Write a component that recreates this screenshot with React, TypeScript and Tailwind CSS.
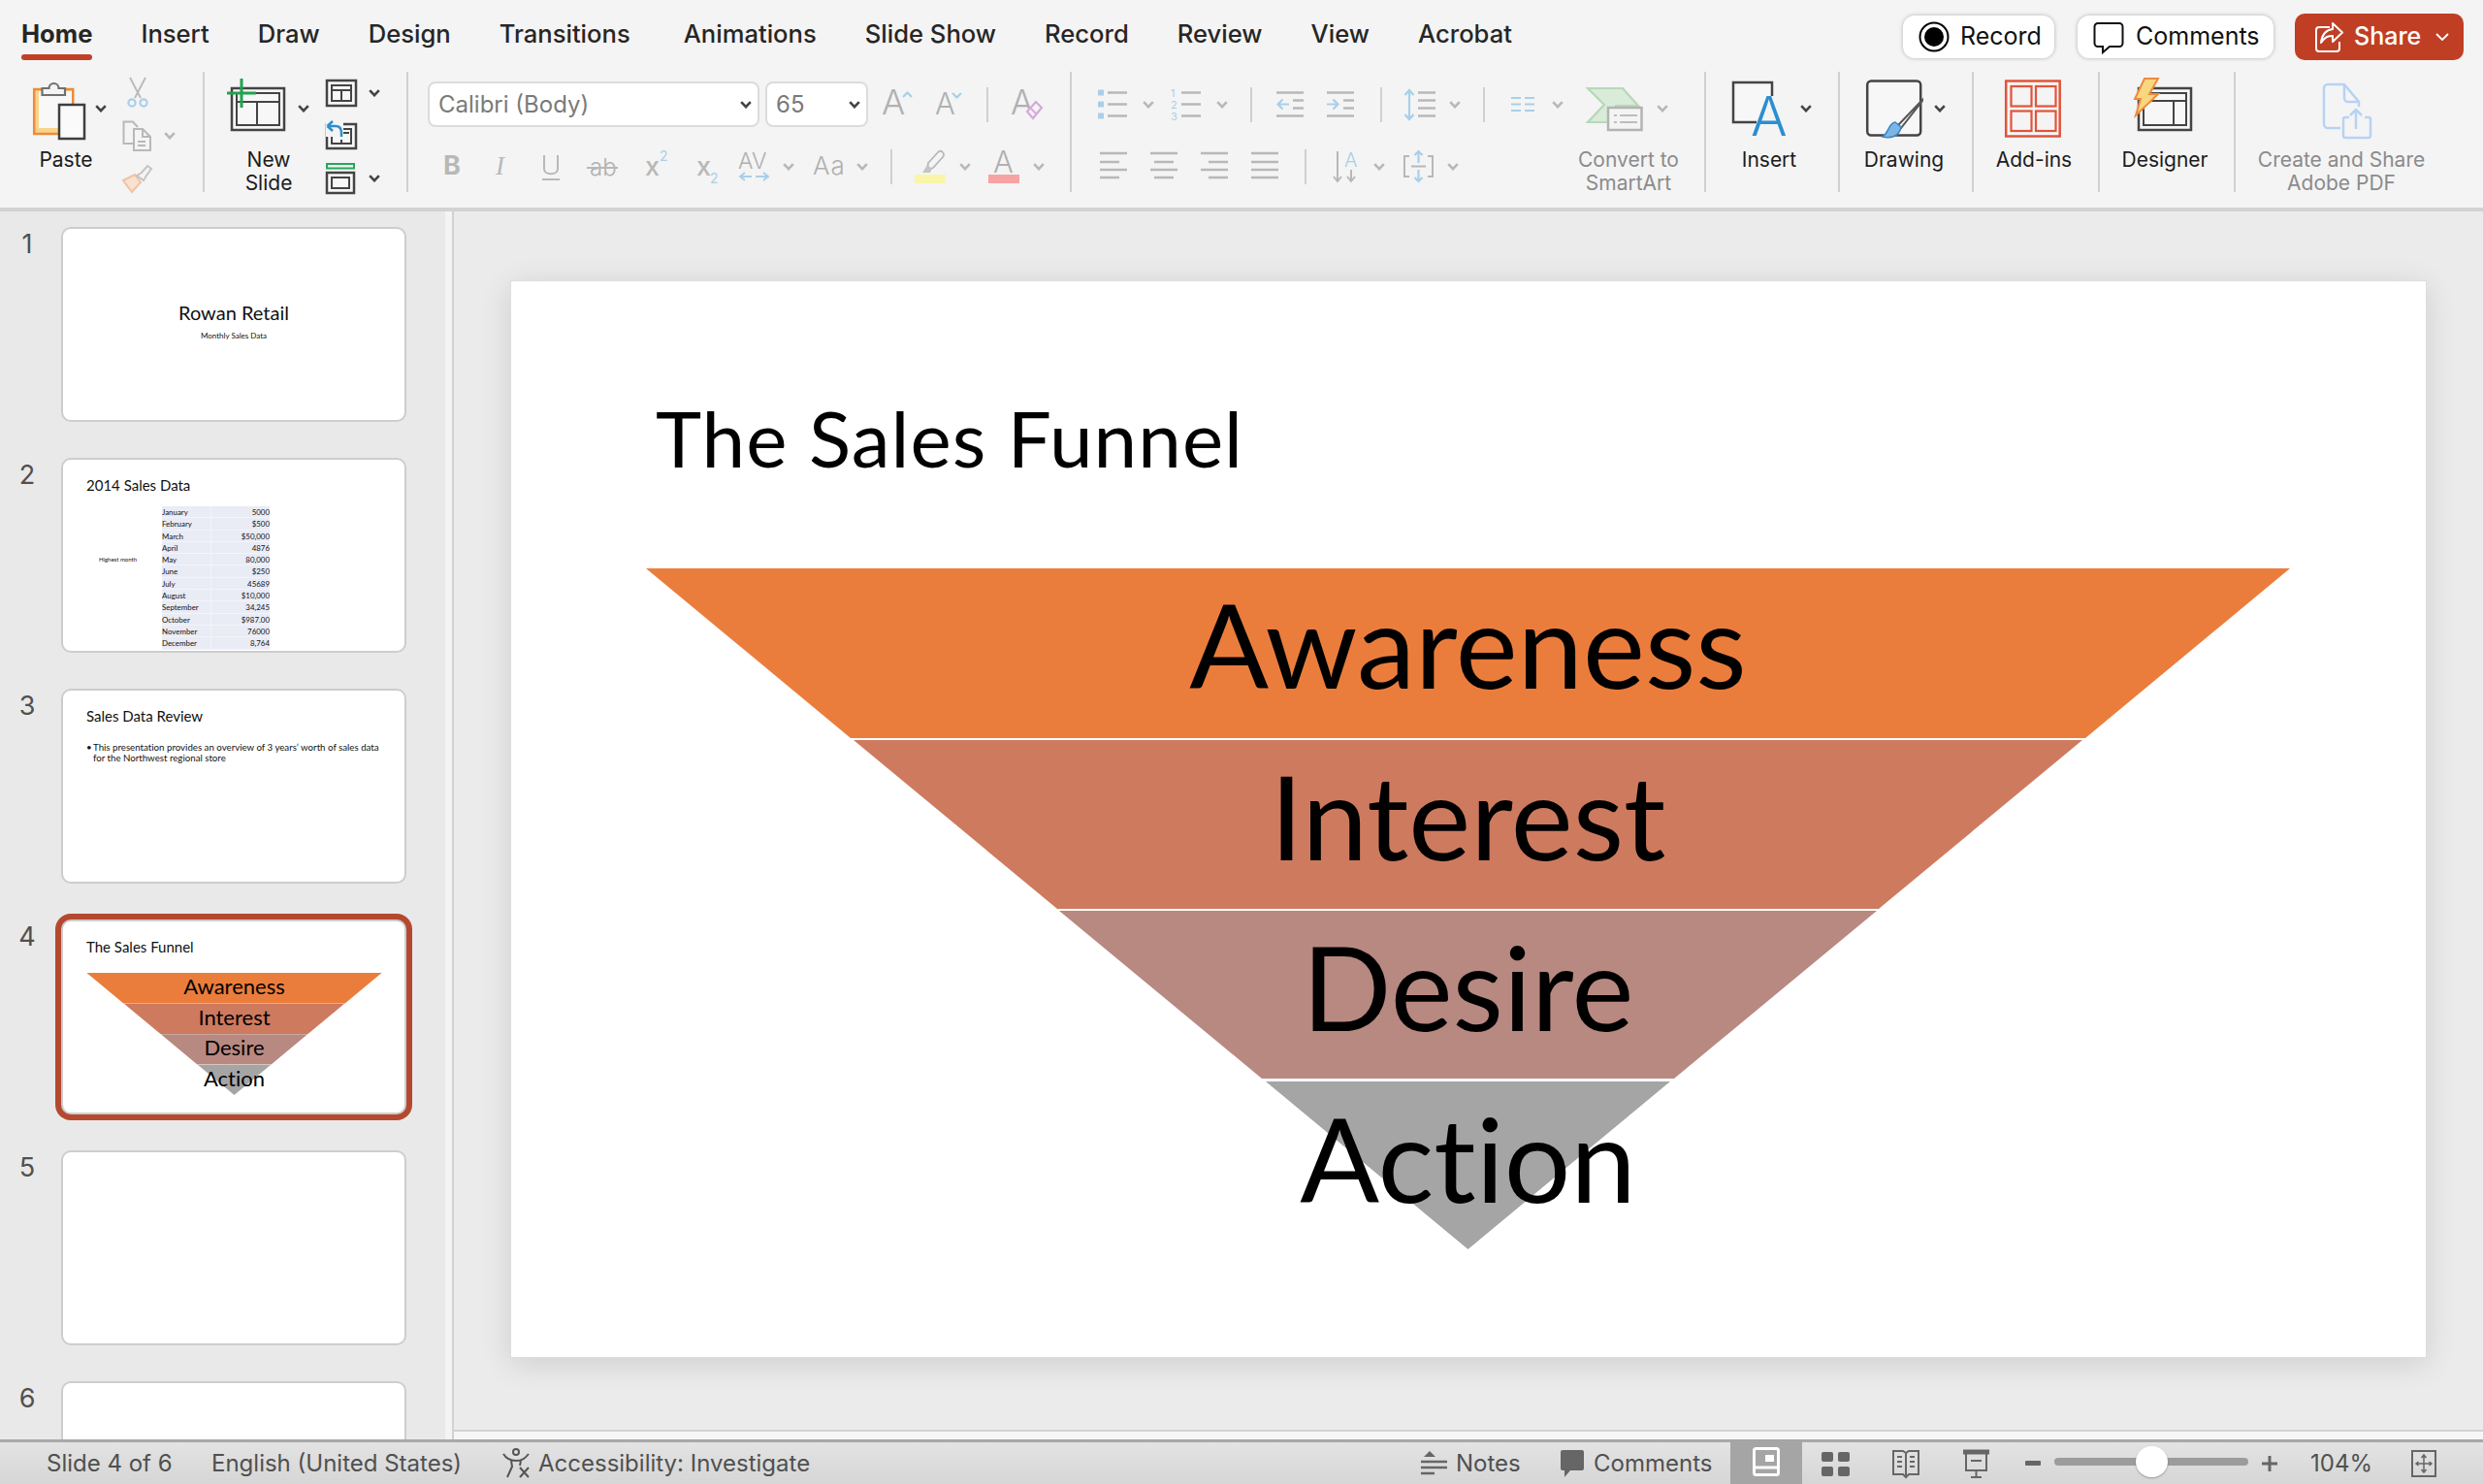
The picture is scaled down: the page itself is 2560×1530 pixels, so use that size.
import type { ReactNode } from 'react';

const TABS = ['Home', 'Insert', 'Draw', 'Design', 'Transitions', 'Animations', 'Slide Show', 'Record', 'Review', 'View', 'Acrobat'];

const SALES: [string, string][] = [
    ['January', '5000'],
    ['February', '$500'],
    ['March', '$50,000'],
    ['April', '4876'],
    ['May', '80,000'],
    ['June', '$250'],
    ['July', '45689'],
    ['August', '$10,000'],
    ['September', '34,245'],
    ['October', '$987.00'],
    ['November', '76000'],
    ['December', '8,764'],
];

const GRAY = '#b8b8b8';
const BLUE = '#a9cfe8';
const DARK = '#444444';

function Chev({ dark, className = '' }: { dark?: boolean; className?: string }) {
    return (
        <svg width="12" height="8" viewBox="0 0 12 8" fill="none" className={`shrink-0 ${className}`}>
            <path d="M1.2 1.2 6 6.2l4.8-5" stroke={dark ? DARK : GRAY} strokeWidth="2.6" />
        </svg>
    );
}

function Sep() {
    return <div className="w-[2px] h-[124px] bg-[#d0d0d0] shrink-0" />;
}

function MiniSep({ className = '' }: { className?: string }) {
    return <div className={`w-[2px] h-[36px] bg-[#d0d0d0] shrink-0 ${className}`} />;
}

// Big ribbon button: icon row on top, one or two label lines under it
function BigBtn({ icon, label, width, disabled }: { icon: ReactNode; label: string[]; width: string; disabled?: boolean }) {
    return (
        <div className={`flex flex-col shrink-0 pt-[6px] ${width}`}>
            <div className="flex items-center h-[64px]">{icon}</div>
            <div className={`mt-[9px] text-center text-[21px] leading-[24px] ${disabled ? 'text-[#8b8b8b]' : 'text-[#1c1c1c]'}`}>
                {label.map((l) => (
                    <div key={l}>{l}</div>
                ))}
            </div>
        </div>
    );
}

function Frame({ x, y, w, h }: { x: number; y: number; w: number; h: number }) {
    return (
        <>
            <rect x={x} y={y} width={w} height={h} fill="#f7f7f7" stroke="#444" strokeWidth="2.5" />
            <rect x={x + 5} y={y + 5} width={w - 10} height={h - 10} fill="none" stroke="#444" strokeWidth="2" />
        </>
    );
}

function Lines({ rows }: { rows: [number, number, number][] }) {
    return (
        <>
            {rows.map(([x1, x2, y]) => (
                <path key={`${x1}-${y}`} d={`M${x1} ${y}H${x2}`} stroke={GRAY} strokeWidth="2.5" />
            ))}
        </>
    );
}

function Ico({ w, h = 36, children, className = '' }: { w: number; h?: number; children: ReactNode; className?: string }) {
    return (
        <svg width={w} height={h} viewBox={`0 0 ${w} ${h}`} fill="none" className={`shrink-0 overflow-visible ${className}`} fontFamily="Inter, sans-serif">
            {children}
        </svg>
    );
}

function Ribbon() {
    return (
        <div className="flex items-start h-[140px] shrink-0">
            {/* Clipboard */}
            <BigBtn
                width="w-[96px] ml-[20px]"
                label={['Paste']}
                icon={
                    <>
                        <Ico w={54} h={66} className="ml-[14px]">
                            <rect x="1.2" y="13" width="40" height="46" fill="#f8d48a" stroke="#ed8b3c" strokeWidth="2.5" />
                            <rect x="6" y="15" width="34" height="38" fill="#f8f8f8" />
                            <path d="M9.5 19v-7h7a5 5 0 0 1 10 0h6.500v7z" fill="#f4f4f4" stroke="#707070" strokeWidth="2.200" />
                            <rect x="27" y="29" width="26" height="35" fill="#fafafa" stroke="#3f3f3f" strokeWidth="2.500" />
                        </Ico>
                        <Chev dark className="ml-[10px]" />
                    </>
                }
            />
            <div className="flex flex-col gap-[12px] pt-[6px] ml-[10px] shrink-0">
                <Ico w={32} h={32}>
                    <path d="M8 0 19 21M24 0 13 21" stroke={GRAY} strokeWidth="1.800" />
                    <circle cx="10" cy="26" r="3.600" stroke={BLUE} strokeWidth="2.200" />
                    <circle cx="22" cy="26" r="3.600" stroke={BLUE} strokeWidth="2.200" />
                </Ico>
                <div className="flex items-center h-[32px]">
                    <Ico w={32} h={32}>
                        <path d="M12 24H1.500V1.500H11L16 7" stroke={GRAY} strokeWidth="2" />
                        <path d="M12 9h9l8 8v14H12z" stroke={GRAY} strokeWidth="2" />
                        <path d="M21 9v8h8M16 22h8M16 26h8" stroke={GRAY} strokeWidth="2" />
                    </Ico>
                    <Chev className="ml-[11px]" />
                </div>
                <Ico w={32} h={32}>
                    <path d="m1 18 12-6 6 8-9 10z" fill="#f9e0cf" stroke="#efc3a3" strokeWidth="2" />
                    <path d="m15 13 5-3 6-7 4 3-5 7-3 5z" fill="#f4f4f4" stroke="#c4c4c4" strokeWidth="2" />
                </Ico>
            </div>
            <div className="ml-[28px]">
                <Sep />
            </div>

            {/* Slides */}
            <BigBtn
                width="w-[114px] ml-[9px]"
                label={['New', 'Slide']}
                icon={
                    <>
                        <Ico w={60} h={64} className="ml-[14px]">
                            <Frame x={5} y={11} w={54} h={43} />
                            <path d="M11 25h43M31 25v23" stroke="#444" strokeWidth="2" />
                            <path d="M0 16h30M15 1v30" stroke="#1fa34f" strokeWidth="3" />
                        </Ico>
                        <Chev dark className="ml-[13px]" />
                    </>
                }
            />
            <div className="flex flex-col gap-[12px] pt-[6px] ml-[2px] shrink-0">
                <div className="flex items-center h-[32px]">
                    <Ico w={32} h={32}>
                        <Frame x={1} y={3} w={30} h={26} />
                        <path d="M6 13h20M16 13v11" stroke="#444" strokeWidth="2" />
                    </Ico>
                    <Chev dark className="ml-[12px]" />
                </div>
                <Ico w={32} h={32}>
                    <Frame x={1} y={4} w={30} h={25} />
                    <rect x="0" y="0" width="18" height="17" fill="#f4f4f4" />
                    <path d="M18 9h6M18 13h6M16 20v4" stroke="#444" strokeWidth="2" />
                    <path d="M1.500 6 7 1M1.500 6 7 11M2 6h8c4 0 6 3 6 7v4" stroke="#2b8fd0" strokeWidth="2.500" />
                </Ico>
                <div className="flex items-center h-[32px]">
                    <Ico w={32} h={32}>
                        <rect x="1" y="1" width="28" height="4.500" stroke="#26a65b" strokeWidth="2" />
                        <Frame x={1} y={10} w={28} h={21} />
                    </Ico>
                    <Chev dark className="ml-[12px]" />
                </div>
            </div>
            <div className="ml-[27px]">
                <Sep />
            </div>

            {/* Font */}
            <div className="flex flex-col w-[682px] shrink-0 pl-[20px] pt-[10px]">
                <div className="flex items-center h-[47px]">
                    <div className="flex items-center justify-between w-[342px] h-[47px] bg-white border-2 border-[#dcdcdc] rounded-[8px] pl-[9px] pr-[6px] text-[24px] text-[#7a7a7a]">
                        Calibri (Body)
                        <Chev dark />
                    </div>
                    <div className="flex items-center justify-between w-[106px] h-[47px] ml-[6px] bg-white border-2 border-[#dcdcdc] rounded-[8px] pl-[9px] pr-[6px] text-[24px] text-[#7a7a7a]">
                        65
                        <Chev dark />
                    </div>
                    <Ico w={32} className="ml-[14px]">
                        <text x="0" y="28" fontSize="36" fontWeight="300" fill="#b0b0b0">A</text>
                        <path d="m22 10 4.500-4.500L31 10" stroke={BLUE} strokeWidth="2.200" />
                    </Ico>
                    <Ico w={28} className="ml-[23px]">
                        <text x="0" y="28" fontSize="31" fontWeight="300" fill="#b0b0b0">A</text>
                        <path d="m18 6 4.500 4.500L27 6" stroke={BLUE} strokeWidth="2.200" />
                    </Ico>
                    <MiniSep className="ml-[25px]" />
                    <Ico w={32} className="ml-[23px]">
                        <text x="0" y="28" fontSize="35" fontWeight="300" fill="#b0b0b0">A</text>
                        <path d="m17 25 9-10 6 6-9 11z" fill="#f4f4f4" stroke="#d6a8dc" strokeWidth="2.200" />
                        <path d="m21 22 5 5" stroke="#d6a8dc" strokeWidth="2" />
                    </Ico>
                </div>
                <div className="flex items-center h-[36px] mt-[23px]">
                    <Ico w={16} className="ml-[16px]">
                        <text x="0" y="26" fontSize="27" fontWeight="700" fill="#b8b8b8">B</text>
                    </Ico>
                    <Ico w={16} className="ml-[37px]">
                        <text x="1" y="26" fontSize="27" fontStyle="italic" fontFamily="Liberation Serif, serif" fill="#b8b8b8">I</text>
                    </Ico>
                    <Ico w={18} className="ml-[33px]">
                        <path d="M2 6v14c0 7 14 7 14 0V6" stroke="#b8b8b8" strokeWidth="2" />
                        <path d="M0 31h18" stroke="#b8b8b8" strokeWidth="2" />
                    </Ico>
                    <Ico w={32} className="ml-[28px]">
                        <text x="3" y="27" fontSize="24" fontWeight="300" fill="#b0b0b0">ab</text>
                        <path d="M0 19h32" stroke="#b8b8b8" strokeWidth="2" />
                    </Ico>
                    <Ico w={23} className="ml-[28px]">
                        <text x="0" y="27" fontSize="27" fontWeight="500" fill="#b8b8b8">x</text>
                        <text x="15" y="12" fontSize="14" fill={BLUE}>2</text>
                    </Ico>
                    <Ico w={22} className="ml-[30px]">
                        <text x="0" y="27" fontSize="27" fontWeight="500" fill="#b8b8b8">x</text>
                        <text x="14" y="35" fontSize="14" fill={BLUE}>2</text>
                    </Ico>
                    <Ico w={32} className="ml-[21px]">
                        <text x="0" y="20" fontSize="23" fontWeight="300" fill="#b0b0b0">AV</text>
                        <path d="M14 28H2m5-4-5 4 5 4M18 28h13m-5-4 5 4-5 4" stroke={BLUE} strokeWidth="2" />
                    </Ico>
                    <Chev className="ml-[14px]" />
                    <Ico w={32} className="ml-[19px]">
                        <text x="0" y="26" fontSize="26" fontWeight="300" fill="#b0b0b0" letterSpacing="1">Aa</text>
                    </Ico>
                    <Chev className="ml-[13px]" />
                    <MiniSep className="ml-[23px]" />
                    <Ico w={32} className="ml-[23px]">
                        <path d="m14 14 10-11c3-3 8 1 5 5L19 19l-6 2z" stroke="#b8b8b8" strokeWidth="1.800" />
                        <path d="m8 24 5-8 5 4-2 4z" fill="#c4c4c4" />
                        <rect x="0" y="26" width="32" height="9" fill="#f9f6a8" />
                    </Ico>
                    <Chev className="ml-[14px]" />
                    <Ico w={32} className="ml-[18px]">
                        <text x="5" y="24" fontSize="31" fontWeight="300" fill="#b0b0b0">A</text>
                        <rect x="0" y="26" width="32" height="9" fill="#f7a3a3" />
                    </Ico>
                    <Chev className="ml-[14px]" />
                </div>
            </div>
            <Sep />

            {/* Paragraph */}
            <div className="flex flex-col w-[511px] shrink-0 pt-[10px]">
                <div className="flex items-center h-[47px]">
                    <Ico w={30} className="ml-[27px]">
                        <rect x="0" y="2.500" width="6" height="6" fill={BLUE} />
                        <rect x="0" y="14.500" width="6" height="6" fill={BLUE} />
                        <rect x="0" y="26.500" width="6" height="6" fill={BLUE} />
                        <Lines rows={[[10, 30, 5.500], [10, 30, 17.500], [10, 30, 29.500]]} />
                    </Ico>
                    <Chev className="ml-[16px]" />
                    <Ico w={31} className="ml-[17px]">
                        <text x="0" y="10" fontSize="11" fill={BLUE}>1</text>
                        <text x="0" y="22" fontSize="11" fill={BLUE}>2</text>
                        <text x="0" y="34" fontSize="11" fill={BLUE}>3</text>
                        <Lines rows={[[11, 31, 5.500], [11, 31, 17.500], [11, 31, 29.500]]} />
                    </Ico>
                    <Chev className="ml-[16px]" />
                    <MiniSep className="ml-[23px]" />
                    <Ico w={28} className="ml-[25px]">
                        <Lines rows={[[0, 28, 5.500], [17, 28, 13.500], [17, 28, 21.500], [0, 28, 29.500]]} />
                        <path d="M13 17.500H1.500m5-5-5 5 5 5" stroke={BLUE} strokeWidth="2.200" />
                    </Ico>
                    <Ico w={28} className="ml-[24px]">
                        <Lines rows={[[0, 28, 5.500], [17, 28, 13.500], [17, 28, 21.500], [0, 28, 29.500]]} />
                        <path d="M0 17.500h11.500m-5-5 5 5-5 5" stroke={BLUE} strokeWidth="2.200" />
                    </Ico>
                    <MiniSep className="ml-[27px]" />
                    <Ico w={32} className="ml-[23px]">
                        <Lines rows={[[14, 32, 5.500], [14, 32, 13.500], [14, 32, 21.500], [14, 32, 29.500]]} />
                        <path d="M5 3v30M0.500 8 5 3l4.500 5M0.500 28 5 33l4.500-5" stroke={BLUE} strokeWidth="2.200" />
                    </Ico>
                    <Chev className="ml-[14px]" />
                    <MiniSep className="ml-[23px]" />
                    <Ico w={24} className="ml-[27px]">
                        <path d="M0 11h10M14 11h10M0 17.500h10M14 17.500h10M0 24h10M14 24h10" stroke={BLUE} strokeWidth="2.200" />
                    </Ico>
                    <Chev className="ml-[18px]" />
                </div>
                <div className="flex items-center h-[36px] mt-[23px]">
                    <Ico w={28} className="ml-[29px]">
                        <Lines rows={[[0, 28, 4], [0, 20, 13], [0, 28, 21], [0, 20, 29]]} />
                    </Ico>
                    <Ico w={28} className="ml-[24px]">
                        <Lines rows={[[0, 28, 4], [4, 24, 13], [0, 28, 21], [4, 24, 29]]} />
                    </Ico>
                    <Ico w={28} className="ml-[24px]">
                        <Lines rows={[[0, 28, 4], [8, 28, 13], [0, 28, 21], [8, 28, 29]]} />
                    </Ico>
                    <Ico w={28} className="ml-[24px]">
                        <Lines rows={[[0, 28, 4], [0, 28, 13], [0, 28, 21], [0, 28, 29]]} />
                    </Ico>
                    <MiniSep className="ml-[27px]" />
                    <Ico w={26} className="ml-[27px]">
                        <path d="M5 2v31M1 28l4 5 4-5M19 21v12M15 28l4 5 4-5" stroke={GRAY} strokeWidth="2" />
                        <text x="12" y="18" fontSize="20" fontWeight="300" fill={BLUE}>A</text>
                    </Ico>
                    <Chev className="ml-[16px]" />
                    <Ico w={31} className="ml-[19px]">
                        <path d="M6 7H1v21h5M25 7h5v21h-5M8 17.500h15" stroke={GRAY} strokeWidth="2" />
                        <path d="M15.500 14V2m-4 4 4-4 4 4M15.500 21v12m-4-4 4 4 4-4" stroke={BLUE} strokeWidth="2.200" />
                    </Ico>
                    <Chev className="ml-[14px]" />
                </div>
            </div>
            <BigBtn
                disabled
                width="w-[126px]"
                label={['Convert to', 'SmartArt']}
                icon={
                    <>
                        <Ico w={58} h={64} className="ml-[20px]">
                            <path d="M1 11h36l16 18H30l-8 17H1l17-18z" fill="#d9ebd9" stroke="#b7d8b8" strokeWidth="2.200" />
                            <rect x="22" y="31" width="34.500" height="23" fill="#f4f4f4" stroke="#b3b3b3" strokeWidth="2.500" />
                            <path d="M28 39h3M34 39h18M28 46h3M34 46h18" stroke="#bdbdbd" strokeWidth="2" />
                        </Ico>
                        <Chev className="ml-[14px]" />
                    </>
                }
            />
            <div className="ml-[15px]">
                <Sep />
            </div>

            {/* Insert and the rest */}
            <BigBtn
                width="w-[130px]"
                label={['Insert']}
                icon={
                    <>
                        <Ico w={55} h={64} className="ml-[27px]">
                            <path d="M41 19V5H1v41h24" fill="#f7f7f7" stroke="#444" strokeWidth="2.500" />
                            <text x="19" y="60" fontSize="56" fontWeight="300" fill="#2b8fd0">A</text>
                        </Ico>
                        <Chev dark className="ml-[15px]" />
                    </>
                }
            />
            <div className="ml-[6px]">
                <Sep />
            </div>
            <BigBtn
                width="w-[132px]"
                label={['Drawing']}
                icon={
                    <>
                        <Ico w={60} h={66} className="ml-[27px]">
                            <rect x="1.200" y="4.500" width="55" height="56" rx="4" fill="#f7f7f7" stroke="#444" strokeWidth="2.500" />
                            <path d="M58 24 33 50l3 3 22-28z" fill="#f4f4f4" stroke="#555" strokeWidth="2" />
                            <path d="M30 47c-7 1-6 10-13 15 8 2 17 0 19-10z" fill="#7db6e6" stroke="#3b87c4" strokeWidth="1.500" />
                        </Ico>
                        <Chev dark className="ml-[10px]" />
                    </>
                }
            />
            <div className="ml-[4px]">
                <Sep />
            </div>
            <BigBtn
                width="w-[124px]"
                label={['Add-ins']}
                icon={
                    <Ico w={58} h={64} className="ml-[32px]">
                        <rect x="1.200" y="3.500" width="55.500" height="57" stroke="#e0543a" strokeWidth="2.500" />
                        <rect x="6.500" y="9" width="21" height="20.500" stroke="#e0543a" strokeWidth="2.200" />
                        <rect x="32" y="9" width="20.500" height="20.500" stroke="#e0543a" strokeWidth="2.200" />
                        <rect x="6.500" y="34.500" width="21" height="20.500" stroke="#e0543a" strokeWidth="2.200" />
                        <rect x="32" y="34.500" width="20.500" height="20.500" stroke="#e0543a" strokeWidth="2.200" />
                    </Ico>
                }
            />
            <div className="ml-[4px]">
                <Sep />
            </div>
            <BigBtn
                width="w-[134px]"
                label={['Designer']}
                icon={
                    <Ico w={60} h={64} className="ml-[35px]">
                        <Frame x={5} y={11} w={54} h={43} />
                        <path d="M11 24h43M41 24v24" stroke="#444" strokeWidth="2" />
                        <path d="M11 1h14l-9 16h9L2 39l5-17H1z" fill="#f9d680" stroke="#ed8b3c" strokeWidth="2" />
                    </Ico>
                }
            />
            <div className="ml-[4px]">
                <Sep />
            </div>
            <BigBtn
                disabled
                width="w-[218px]"
                label={['Create and Share', 'Adobe PDF']}
                icon={
                    <Ico w={50} h={66} className="ml-[90px]">
                        <path d="M18 53H5a4 4 0 0 1-4-4V12a4 4 0 0 1 4-4h17l15 18v5" stroke="#b7d3f2" strokeWidth="2.500" />
                        <path d="M22 8v14a4 4 0 0 0 4 4h11" stroke="#b7d3f2" strokeWidth="2.500" />
                        <path d="M27 42h-4a2 2 0 0 0-2 2v17a2 2 0 0 0 2 2h24a2 2 0 0 0 2-2V44a2 2 0 0 0-2-2h-4" stroke="#b7d3f2" strokeWidth="2.500" />
                        <path d="M34 54V34m-6 6 6-6 6 6" stroke="#b7d3f2" strokeWidth="2.500" />
                    </Ico>
                }
            />
        </div>
    );
}

function TopBar() {
    return (
        <div className="flex h-[74px] pl-[22px] pr-[20px] shrink-0">
            <div className="flex gap-[50px]">
                {TABS.map((t) => (
                    <div key={t} className={`flex flex-col pt-[19px] ${t === 'Animations' ? 'ml-[5px]' : ''}`}>
                        <span className={`text-[25.600px] leading-[32px] ${t === 'Home' ? 'font-bold text-[#262626]' : 'font-medium text-[#262626]'}`}>{t}</span>
                        <span className={`mt-[5px] h-[6px] rounded-full ${t === 'Home' ? 'bg-[#c14026]' : ''}`} />
                    </div>
                ))}
            </div>
            <div className="ml-auto flex items-start">
                <div className="flex items-center gap-[11px] w-[156px] h-[44px] mt-[16px] pl-[16px] bg-white rounded-[12px] shadow-[0_0_4px_rgba(0,0,0,0.28)] text-[25px] text-[#111]">
                    <Ico w={32} h={32}>
                        <circle cx="16" cy="16" r="14.500" stroke="#000" strokeWidth="2" />
                        <circle cx="16" cy="16" r="10" fill="#000" />
                    </Ico>
                    Record
                </div>
                <div className="flex items-center gap-[12px] w-[202px] h-[44px] mt-[16px] ml-[24px] pl-[16px] bg-white rounded-[12px] shadow-[0_0_4px_rgba(0,0,0,0.28)] text-[25px] text-[#111]">
                    <Ico w={32} h={32}>
                        <path d="M5 2h22a3.500 3.500 0 0 1 3.500 3.500v17A3.500 3.500 0 0 1 27 26H17l-7 6v-6H5a3.500 3.500 0 0 1-3.500-3.500v-17A3.500 3.500 0 0 1 5 2z" stroke="#111" strokeWidth="2" />
                    </Ico>
                    Comments
                </div>
                <div className="flex items-center w-[174px] h-[48px] mt-[14px] ml-[22px] pl-[20px] bg-[#c03f24] rounded-[10px] text-[25px] font-medium text-white">
                    <Ico w={30} h={32}>
                        <path d="M16 6H5a3 3 0 0 0-3 3v19a3 3 0 0 0 3 3h18a3 3 0 0 0 3-3v-7" stroke="#fff" strokeWidth="2" />
                        <path d="M19 2v6C12 9 8 13 7 22c4-6 7-7 12-7v6l10-9.500z" stroke="#fff" strokeWidth="2" strokeLinejoin="round" />
                    </Ico>
                    <span className="ml-[11px]">Share</span>
                    <svg width="14" height="8" viewBox="0 0 14 8" fill="none" className="ml-[15px]">
                        <path d="m1 1 6 6 6-6" stroke="#fff" strokeWidth="1.800" />
                    </svg>
                </div>
            </div>
        </div>
    );
}

// Same polygons for the big slide and the thumbnail, only scaled by the svg box
function FunnelShape({ className }: { className: string }) {
    return (
        <svg viewBox="0 0 1695 702" className={className}>
            <polygon points="0,0 1695,0 1484,175 211,175" fill="#eb7d3c" />
            <polygon points="214,177 1481,177 1271,351 424,351" fill="#ce7a5f" />
            <polygon points="426,353 1269,353 1060,526 635,526" fill="#b88981" />
            <polygon points="639,529 1056,529 847.500,702" fill="#a5a5a5" />
        </svg>
    );
}

const FUNNEL = ['Awareness', 'Interest', 'Desire', 'Action'];

function Thumb({ n, active, children }: { n: number; active?: boolean; children?: ReactNode }) {
    return (
        <div className="flex h-[201px] mb-[37px] shrink-0">
            <div className="w-[63px] pt-[1px] pr-[7px] text-center text-[27px] leading-[34px] text-[#505050]">{n}</div>
            <div
                className={`relative w-[356px] h-[201px] bg-white border-2 border-[#cdcdcd] rounded-[10px] overflow-visible text-[#111] font-['Lato',sans-serif] [font-variant-ligatures:none] ${
                    active ? 'ring-[6px] ring-[#b5492f]' : ''
                }`}
            >
                {children}
            </div>
        </div>
    );
}

function SlidePanel() {
    return (
        <div className="w-[459px] shrink-0 pt-[16px] bg-[#e9e9e9] overflow-hidden flex flex-col">
            <Thumb n={1}>
                <div className="flex flex-col items-center pt-[73px]">
                    <div className="text-[20px] leading-[26px]">Rowan Retail</div>
                    <div className="mt-[6px] text-[8px] leading-[10px]">Monthly Sales Data</div>
                </div>
            </Thumb>
            <Thumb n={2}>
                <div className="pl-[24px] pt-[16px] text-[15px] leading-[20px]">2014 Sales Data</div>
                <div className="flex items-start mt-[12px]">
                    <div className="w-[102px] pl-[37px] pt-[50px] text-[6px] leading-[10px] whitespace-nowrap">Highest month</div>
                    <div className="w-[111px] bg-[#e9ebf5]">
                        {SALES.map(([m, v]) => (
                            <div key={m} className="flex h-[12.300px] text-[7.900px] leading-[12.300px] border-b border-[#f4f5fa]">
                                <span className="w-[51px] border-r border-[#f4f5fa]">{m}</span>
                                <span className="flex-1 text-right">{v}</span>
                            </div>
                        ))}
                    </div>
                </div>
            </Thumb>
            <Thumb n={3}>
                <div className="pl-[24px] pt-[16px] text-[15px] leading-[20px]">Sales Data Review</div>
                <div className="flex pl-[24px] pr-[26px] mt-[17px] text-[9.700px] leading-[11px]">
                    <span className="w-[7px] shrink-0">•</span>
                    <span>This presentation provides an overview of 3 years’ worth of sales data for the Northwest regional store</span>
                </div>
            </Thumb>
            <Thumb n={4} active>
                <div className="pl-[24px] pt-[16px] text-[15px] leading-[20px]">The Sales Funnel</div>
                <div className="relative w-[305px] h-[126px] ml-[24px] mt-[17px]">
                    <FunnelShape className="absolute inset-0 w-full h-full" />
                    <div className="relative flex flex-col">
                        {FUNNEL.map((t) => (
                            <div key={t} className="flex justify-center items-center h-[31.800px] pb-[4px] text-[22px] leading-none text-black">
                                {t}
                            </div>
                        ))}
                    </div>
                </div>
            </Thumb>
            <Thumb n={5} />
            <Thumb n={6} />
        </div>
    );
}

function Stage() {
    return (
        <div className="flex-1 flex flex-col min-w-0">
            <div className="flex-1 pl-[58px] pt-[71px] bg-[#ebebeb]">
                <div className="w-[1976px] h-[1111px] bg-white border border-[#dedede] shadow-[0_6px_30px_rgba(0,0,0,0.12)] font-['Lato',sans-serif] [font-variant-ligatures:none] text-black">
                    <div className="pl-[149px] pt-[113px] text-[80px] leading-[96px] tracking-[1px]">The Sales Funnel</div>
                    <div className="relative w-[1695px] h-[702px] ml-[139px] mt-[87px]">
                        <FunnelShape className="absolute inset-0 w-full h-full" />
                        <div className="relative flex flex-col">
                            {FUNNEL.map((t) => (
                                <div key={t} className="flex justify-center items-center h-[176.500px] pb-[21px] text-[121px] leading-none">
                                    {t}
                                </div>
                            ))}
                        </div>
                    </div>
                </div>
            </div>
            <div className="h-[10px] shrink-0 border-t-2 border-[#d2d2d2] bg-[#f6f6f6]" />
        </div>
    );
}

function StatusBar() {
    return (
        <div className="flex items-center h-[46px] shrink-0 border-t-[3px] border-[#a8a8a8] bg-gradient-to-b from-[#e3e3e3] to-[#d6d6d6] pl-[48px] pr-[48px] text-[24px] text-[#505050] whitespace-nowrap">
            <span className="w-[129px]">Slide 4 of 6</span>
            <span className="w-[260px] ml-[41px]">English (United States)</span>
            <Ico w={31} h={32} className="ml-[39px]">
                <circle cx="15" cy="4" r="3" stroke="#555" strokeWidth="2" />
                <path d="M2 6c3 5 7 7 13 7s9-2 13-7M10 13l1 6-5 11M20 13l-1 5M19 20l9 10M28 20l-9 10" stroke="#555" strokeWidth="2" />
            </Ico>
            <span className="w-[277px] ml-[7px]">Accessibility: Investigate</span>
            <div className="ml-auto flex items-center h-full">
                <Ico w={27} h={26}>
                    <path d="m9 0 6 6H3z" fill="#666" />
                    <path d="M0 11h27M0 17h27M0 23h14" stroke="#666" strokeWidth="2.500" />
                </Ico>
                <span className="w-[65px] ml-[9px]">Notes</span>
                <Ico w={26} h={30} className="ml-[42px]">
                    <path d="M3 1h20a2 2 0 0 1 2 2v17a2 2 0 0 1-2 2H11l-6 7v-7H3a2 2 0 0 1-2-2V3a2 2 0 0 1 2-2z" fill="#666" />
                </Ico>
                <span className="w-[120px] ml-[9px]">Comments</span>
                <div className="flex items-center justify-center w-[74px] h-[46px] -mt-[3px] ml-[21px] bg-[#a5a5a5]">
                    <Ico w={28} h={30}>
                        <rect x="1.500" y="1.500" width="25" height="27" rx="2" stroke="#fff" strokeWidth="3" />
                        <rect x="13" y="8" width="9" height="7" fill="#fff" />
                        <path d="M2 21h24" stroke="#fff" strokeWidth="3" />
                    </Ico>
                </div>
                <Ico w={31} h={30} className="ml-[19px]">
                    <rect x="1" y="3" width="12" height="10" rx="2" fill="#666" />
                    <rect x="18" y="3" width="12" height="10" rx="2" fill="#666" />
                    <rect x="1" y="18" width="12" height="10" rx="2" fill="#666" />
                    <rect x="18" y="18" width="12" height="10" rx="2" fill="#666" />
                </Ico>
                <Ico w={30} h={30} className="ml-[42px]">
                    <path d="M15 4 12 2H2v24h10l3 3 3-3h10V2H18zM15 4v25" stroke="#666" strokeWidth="2" />
                    <path d="M6 8h5M6 13h5M6 18h5M19 8h5M19 13h5M19 18h5" stroke="#666" strokeWidth="2" />
                </Ico>
                <Ico w={29} h={30} className="ml-[43px]">
                    <path d="M1 3h27" stroke="#666" strokeWidth="5" />
                    <rect x="4" y="4" width="21" height="18" stroke="#666" strokeWidth="2" />
                    <path d="M9 12h11M14.500 22v6M9 29h11" stroke="#666" strokeWidth="2" />
                </Ico>
                <div className="w-[16px] h-[5px] ml-[36px] rounded-[1px] bg-[#666]" />
                <div className="relative flex items-center w-[200px] h-[32px] ml-[14px] -mt-[3px]">
                    <div className="w-full h-[8px] rounded-full bg-[#9c9c9c]" />
                    <div className="absolute left-[84px] top-0 w-[33px] h-[32px] rounded-full bg-white shadow-[0_1px_2px_rgba(0,0,0,0.3)]" />
                </div>
                <Ico w={16} h={16} className="ml-[14px]">
                    <path d="M0 8h16M8 0v16" stroke="#666" strokeWidth="3" />
                </Ico>
                <span className="w-[64px] ml-[34px]">104%</span>
                <Ico w={26} h={28} className="ml-[40px]">
                    <rect x="1" y="1" width="24" height="26" stroke="#666" strokeWidth="2" />
                    <path d="M13 5v18M10.500 8 13 5l2.500 3M10.500 20l2.500 3 2.500-3M5 14h16M7.500 12 5 14l2.500 2M18.500 12l2.500 2-2.500 2" stroke="#666" strokeWidth="1.500" />
                </Ico>
            </div>
        </div>
    );
}

export default function App() {
    return (
        <div className="flex flex-col w-full h-screen overflow-hidden bg-[#f4f4f4] font-['Inter',sans-serif]">
            <TopBar />
            <Ribbon />
            <div className="h-[4px] shrink-0 bg-[#d2d2d2]" />
            <div className="flex flex-1 min-h-0">
                <SlidePanel />
                <div className="w-[7px] shrink-0 bg-[#f4f4f4]" />
                <div className="w-[2px] shrink-0 bg-[#d2d2d2]" />
                <Stage />
            </div>
            <StatusBar />
        </div>
    );
}
